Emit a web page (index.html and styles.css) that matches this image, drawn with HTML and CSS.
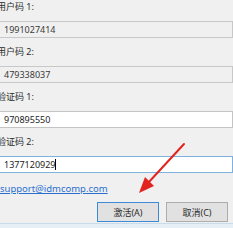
FILE: index.html
```html
<!DOCTYPE html>
<html>
<head>
    <meta charset="UTF-8">
    <title>注册</title>
    <link rel="stylesheet" href="styles.css">
</head>
<body>
    <div class="dialog">
        <div class="group">
            <div class="label">用户码 1:</div>
            <div class="field readonly">1991027414</div>
        </div>
        <div class="group">
            <div class="label">用户码 2:</div>
            <div class="field readonly">479338037</div>
        </div>
        <div class="group">
            <div class="label">验证码 1:</div>
            <div class="field">970895550</div>
        </div>
        <div class="group">
            <div class="label">验证码 2:</div>
            <div class="field focused">1377120929<span class="caret"></span></div>
        </div>

        <a href="#" class="support-link">support@idmcomp.com</a>

        <div class="buttons">
            <button class="btn default">激活(A)</button>
            <button class="btn">取消(C)</button>
        </div>
    </div>

    <div class="status-strip"></div>

    <!-- red pointer drawn over the dialog -->
    <svg class="arrow" width="233" height="228" viewBox="0 0 233 228">
        <line x1="184" y1="144" x2="148" y2="183" stroke="#e2231f" stroke-width="2" stroke-linecap="round"/>
        <polygon points="139,193 145,177 154,186" fill="#e2231f"/>
    </svg>
</body>
</html>
```

FILE: styles.css
```css
body {
    background-color: #f0f0f0;
    color: #2b2b2b;
    font-family: "Noto Sans", "Noto Sans CJK SC", sans-serif;
    font-size: 9px;
    margin: 0;
    padding: 0;
    width: 233px;
    height: 228px;
    overflow: hidden;
    position: relative;
}

.dialog {
    display: flex;
    flex-direction: column;
    margin-left: -8px;
    width: 241px;
}

.group {
    display: flex;
    flex-direction: column;
    height: 45px;
}

.label {
    height: 14px;
    line-height: 14px;
    padding-left: 5px;
    margin-bottom: 7px;
}

.field {
    box-sizing: border-box;
    height: 17px;
    line-height: 15px;
    padding-left: 11px;
    border: 1px solid #c4c4c4;
    background-color: #ffffff;
    color: #1e1e1e;
    display: flex;
    align-items: center;
}

.field.readonly {
    background-color: #f0f0f0;
    border-color: #c8c8c8;
    color: #3a3a3a;
}

.field.focused {
    border-color: #7eb0e0;
}

.caret {
    display: inline-block;
    width: 1px;
    height: 11px;
    background-color: #000000;
}

.support-link {
    display: block;
    margin-top: 2px;
    margin-left: 8px;
    height: 14px;
    line-height: 14px;
    margin-bottom: 6px;
    color: #2a6fd0;
    font-size: 9.5px;
    text-decoration: underline;
    width: max-content;
}

.buttons {
    display: flex;
    justify-content: flex-end;
    gap: 7px;
    padding-right: 5px;
}

.btn {
    box-sizing: border-box;
    width: 62px;
    height: 20px;
    padding: 0;
    border: 1px solid #adadad;
    background-color: #e1e1e1;
    color: #2b2b2b;
    font-family: "Noto Sans", "Noto Sans CJK SC", sans-serif;
    font-size: 9px;
}

.btn.default {
    border-color: #3d8ad8;
}

.status-strip {
    position: absolute;
    left: 0;
    right: 0;
    bottom: 0;
    height: 4px;
    border-top: 1px solid #c9dcec;
    background-color: #e6eef6;
}

.arrow {
    position: absolute;
    left: 0;
    top: 0;
    pointer-events: none;
}
```
